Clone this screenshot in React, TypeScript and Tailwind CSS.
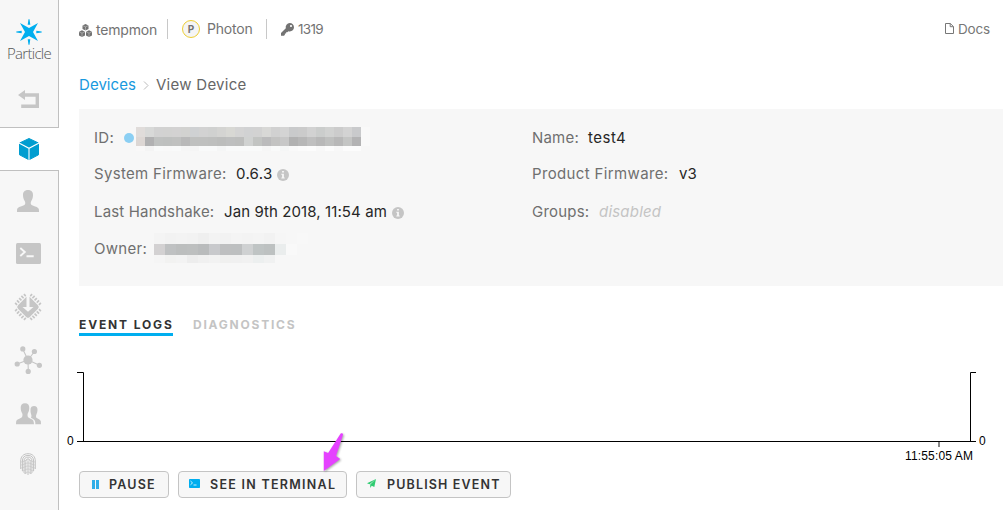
import type { ReactNode } from 'react';

const idTop = ['#e0dcda', '#d8d9d8', '#d2d2d2', '#d2d2d1', '#d3d2d2', '#d2d2d0', '#cfd1d3', '#d2d2d2', '#d0d1d0', '#d4d4d2', '#d8d8d4', '#d4d4d4', '#d1d2d3', '#d2d2d2', '#d8d8d6', '#d1d1d1', '#d4d4d4', '#c9cacb', '#cbcbcb', '#d2d2d2', '#cbcdcc', '#d1d2d1', '#cccccc', '#d3d3d3', '#c9cacc', '#f9f9f9'];
const idBottom = ['#ddd7d4', '#b1b1b2', '#bfc1c0', '#bec0bf', '#c0c1c0', '#b9b9b9', '#bfc0bf', '#bfc0bf', '#bebfbe', '#bcbdbc', '#bebfbf', '#bdbebd', '#d0d2d1', '#c2c4c2', '#bbbbbc', '#c3c3c2', '#c7c7c7', '#b1b1b1', '#b7b7b7', '#bfbfbf', '#b8b8b8', '#bfc0bf', '#b8b8b8', '#c4c5c4', '#b3b3b4', '#f9f9f9'];
const idFaint = ['#f9f8f8', '#f4f4f4', '#f9fafa', '#f9f9f9', '#f9fafa', '#f6f6f6', '#f5f5f5', '#f9fafa', '#f9fafa', '#f5f6f6', '#f9fafa', '#f9fafa', '#f9fafa', '#f9fafa', '#f6f6f6', '#f9fafa', '#f5f6f6', '#f9f9f9', '#fbfbfb', '#fcfcfc', '#f8f8f8', '#fcfcfc', '#f8f8f8', '#fcfcfc', '#fcfcfc', '#f7f7f7'];
const ownerTop = ['#f4f4f4', '#f2f2f2', '#f3f3f3', '#f2f2f2', '#efefef', '#f3f3f3', '#f2f2f2', '#f4f4f4', '#f3f3f3', '#f4f4f4', '#f2f2f2', '#f6f6f6', '#f7f7f7', '#f8f8f8'];
const ownerMid = ['#d3d1d2', '#bfc1c2', '#bcbebe', '#bdbfbf', '#b9bbbc', '#c8c9cc', '#bebfc0', '#bdbfc0', '#cfd1d2', '#bfc4c4', '#bdc1c1', '#eaeded', '#f9f9f9', '#f7f7f7'];
const ownerLow = ['#f5f5f5', '#f2f2f1', '#f3f3f3', '#ededed', '#f0f0f0', '#f2f2f2', '#f0f0ef', '#f0f0f0', '#f1f1f1', '#ecefef', '#f0f1f1', '#f7f7f7', '#f7f7f7', '#f7f7f7'];

function Cells({ colors, cell, row }: { colors: string[]; cell: string; row: string }) {
  return (
    <div className="flex">
      {colors.map((c, i) => (
        <span key={i} className={`block shrink-0 ${cell} ${row}`} style={{ backgroundColor: c }} />
      ))}
    </div>
  );
}

function Info() {
  return (
    <svg width="12" height="12" viewBox="0 0 12 12" className="mt-px shrink-0">
      <circle cx="6" cy="6" r="6" fill="#c5c5c5" />
      <path d="M5.1 2h1.8v1.5H5.1zM4.3 4.7h2.6v3.7h.8v1H4.3v-1h.8V5.7h-.8z" fill="#f7f7f7" />
    </svg>
  );
}

function Star() {
  return (
    <svg width="26" height="26" viewBox="-13 -13 26 26" fill="#00aeef">
      <path d="M-9-9 0-4 9-9 4 0 9 9 0 4-9 9-4 0z" />
      <path d="M-1.300-7.300h2.600L.5-12.700h-1zM-1.300 7.300h2.600l-.8 5.400h-1zM-7.300-1.300v2.600L-12.700.5v-1zM7.300-1.300v2.600L12.700.5v-1z" />
    </svg>
  );
}

function Person() {
  return (
    <svg width="22" height="22" viewBox="0 0 22 22" fill="#c6c6c6" className="mr-[2px]">
      <path d="M11 0c3.400 0 5.200 2.100 5 5.300-.1 2.600-.7 4.300-1.700 5.700-.8 1.200-.8 3.500.3 4.100 2.900 1.400 6.900 2 7.300 4.400.1.800.1 1.600.1 2.500H0c0-.9 0-1.700.1-2.500.4-2.400 4.400-3 7.300-4.400 1.100-.6 1.100-2.900.3-4.100C6.700 9.600 6.100 7.900 6 5.300 5.800 2.100 7.600 0 11 0z" />
    </svg>
  );
}

function Chip() {
  return (
    <svg width="28" height="28" viewBox="-14 -14 28 28">
      <g transform="rotate(45)">
        <rect x="-8.300" y="-8.300" width="16.600" height="16.600" rx="2.500" fill="#c6c6c6" />
        <path d="M-6.200-12V-9.300M-3.100-12.500V-9.300M0-12.500V-9.300M3.100-12.500V-9.300M6.200-12V-9.300M-6.200 12V9.300M-3.100 12.500V9.300M0 12.500V9.300M3.100 12.500V9.300M6.200 12V9.300M-12-6.200H-9.300M-12.500-3.100H-9.300M-12.500 0H-9.300M-12.500 3.100H-9.300M-12-6.200H-9.300M-12 6.200H-9.300M12-6.200H9.300M12.500-3.100H9.300M12.500 0H9.300M12.500 3.100H9.300M12 6.200H9.300" stroke="#c6c6c6" strokeWidth="1.700" />
      </g>
      <path d="M-1.500-13h3V0h4L0 4.800-5.500 0h4z" fill="#f7f7f7" />
    </svg>
  );
}

function Finger() {
  return (
    <svg width="16" height="23" viewBox="0 0 16 23" fill="none" stroke="#c2c2c2" strokeWidth="1">
      <path d="M.7 16V8C.7 3.500 3.500.7 8 .7s7.300 2.800 7.300 7.300v8M2.400 18V8c0-3.700 2.100-5.600 5.600-5.600s5.600 1.900 5.600 5.600v10M4.100 20V8c0-2.500 1.400-3.900 3.900-3.900s3.900 1.400 3.900 3.900v12M5.800 21V8.500c0-1.600.7-2.600 2.200-2.600s2.200 1 2.200 2.600V21M8 22V8" />
      <path d="M1 9c3 0 4-2 7-2s4 2 7 2M1 12c3 0 4-2 7-2s4 2 7 2M1 15c3 0 4-2 7-2s4 2 7 2M2 18c3 0 3-2 6-2s3 2 6 2M4 20.500c2 0 2-1.500 4-1.500s2 1.500 4 1.500" strokeWidth=".6" />
    </svg>
  );
}

function Sidebar() {
  return (
    <nav className="flex h-full w-[59px] shrink-0 flex-col">
      <div className="flex h-[127px] flex-col items-center border-r border-[#c0c0c0] bg-[#f7f7f7] pt-[19px]">
        <Star />
        <div className="h-[16px] font-['Open_Sans'] text-[15px] leading-[16px] font-light tracking-[-0.700px] whitespace-nowrap text-[#555]">Particle</div>
        <svg width="22" height="18" viewBox="0 0 22 18" className="mt-[29px]" fill="#c6c6c6">
          <path d="M0 5 7 0v3.200h14V18H3.200v-3.600H17.600V6.800H7V10z" />
        </svg>
      </div>
      <div className="flex h-[44px] items-center justify-center border-y border-[#c0c0c0] bg-white">
        <svg width="22" height="24" viewBox="0 0 22 24" className="mr-[2px]">
          <path d="M11 1.500 20.500 6v11.800l-9.500 5-9.500-5V6z" fill="#019dd0" stroke="#019dd0" strokeLinejoin="round" />
          <path d="m.5 5.700 10.500 5.600 10.500-5.600M11 11.300V24" fill="none" stroke="#fff" strokeWidth="1.100" />
        </svg>
      </div>
      <div className="flex flex-1 flex-col items-center border-r border-[#c0c0c0] bg-[#f7f7f7] pt-[19px]">
        <Person />
        <svg width="25" height="21" viewBox="0 0 25 21" className="mt-[31px] mr-px">
          <rect width="25" height="21" rx="1.500" fill="#c6c6c6" />
          <path d="m4.300 5 4.500 4-4.500 4M10.500 13.300h7.200" fill="none" stroke="#f7f7f7" strokeWidth="1.900" />
        </svg>
        <div className="mt-[29px] mr-[2px] h-[28px]"><Chip /></div>
        <svg width="28" height="28" viewBox="0 0 28 28" className="mt-[25px] mr-[2px]" fill="#c6c6c6">
          <path d="M14 14 8.700 3M14 14 20.500 5.500M14 14 3 18M14 14l11.500 5.300M14 14l.3 11.500" stroke="#c6c6c6" strokeWidth="1.100" />
          <circle cx="14" cy="14" r="4.600" />
          <circle cx="8.800" cy="2.900" r="2.600" />
          <circle cx="20.400" cy="5.500" r="2.600" />
          <circle cx="3.200" cy="18" r="2.600" />
          <circle cx="25.400" cy="19.300" r="2.600" />
          <circle cx="14.200" cy="25.400" r="2.600" />
        </svg>
        <svg width="25" height="22" viewBox="0 0 25 22" className="mt-[29px] mr-px" fill="#c6c6c6">
          <path d="M9 .3c3 0 4.400 1.800 4.300 4.700-.1 2.500-.7 4-1.400 5-.7 1.200-.4 4 .5 4.600 2.300 1.500 5 2 5.300 4.300L18 21.300H0l.1-2.400c.3-2.300 3.200-2.800 5.500-4.300.9-.6 1.200-3.400.5-4.600C5.400 9 4.800 7.500 4.700 5 4.600 2.100 6 .3 9 .3z" />
          <path d="M14.700 5.200c.5-1.300 1.600-2.100 3.300-2.100 2.400 0 3.600 1.400 3.500 4-.1 2-.5 3.200-1 4.100-.7 1.300-.6 3.300.2 3.700 1.900 1 4 1.700 4.200 3.700l.1 2.700h-5.600c0-2.900-.5-4.300-2.600-5.500l-1.900-1c.6-.7.8-2.600.2-3.600-.6-1.200-.8-4-.4-6z" />
        </svg>
        <div className="mt-[28px] mr-[2px] h-[23px]"><Finger /></div>
      </div>
    </nav>
  );
}

function Button({ width, icon, children }: { width: string; icon: ReactNode; children: ReactNode }) {
  return (
    <button className={`flex h-[27px] items-center rounded-[4px] border border-[#c4c4c4] bg-[#f7f7f7] text-[12.500px] font-semibold whitespace-nowrap text-[#333] ${width}`}>
      {icon}
      {children}
    </button>
  );
}

const label = 'shrink-0 whitespace-nowrap text-[#6f6f6f]';
const value = 'shrink-0 whitespace-nowrap text-[#262626]';

export default function App() {
  return (
    <div className="flex h-[510px] w-[1003px] overflow-hidden bg-white font-[Inter,sans-serif]">
      <Sidebar />
      <main className="flex min-w-0 flex-1 flex-col">
        <header className="ml-[20px] flex h-[58px] shrink-0 items-center text-[14px] whitespace-nowrap text-[#737373]">
          <svg width="13" height="13" viewBox="0 0 13 13" className="mt-[3px]" fill="#737373">
            <path d="m6.500 0 3 1.500v3.600l-3 1.500-3-1.500V1.500zM3 6.200l3 1.500v3.700l-3 1.500-3-1.500V7.700zM10 6.200l3 1.500v3.700l-3 1.500-3-1.500V7.700z" />
            <path d="m3.500 1.500 3 1.400 3-1.400M6.500 2.900v3.700M0 7.700l3 1.400 3-1.400M3 9.100v3.800M7 7.700l3 1.400 3-1.400M10 9.100v3.800" fill="none" stroke="#fff" strokeWidth=".35" />
          </svg>
          <span className="ml-[4px] w-[71px] tracking-[-0.200px]">tempmon</span>
          <span className="h-[20px] w-px bg-[#c8c8c8]" />
          <span className="ml-[14px] flex h-[18px] w-[18px] items-center justify-center rounded-full border border-[#edce34] bg-[#f5f5f5] text-[10px] font-bold">P</span>
          <span className="ml-[7px] w-[59px] pb-[2px] tracking-[-0.200px]">Photon</span>
          <span className="h-[20px] w-px bg-[#c8c8c8]" />
          <svg width="13" height="13" viewBox="0 0 13 13" className="ml-[14px]" fill="#737373">
            <path fillRule="evenodd" d="M8.800 0C11.100 0 13 1.900 13 4.200S11.100 8.400 8.800 8.400c-.5 0-1-.1-1.400-.2L6.300 9.300H5.100v1.300H3.900v1.200L3 12.700H0V10l4.800-4.700A4.200 4.200 0 0 1 8.800 0zm1.200 1.900a1.100 1.100 0 1 0 0 2.200 1.100 1.100 0 0 0 0-2.200z" />
          </svg>
          <span className="ml-[4px] flex-1 pt-px text-[13.500px] tracking-[-0.700px]">1319</span>
          <span className="mr-[13px] flex items-center text-[13.500px] text-[#777]">
            <svg width="9" height="11" viewBox="0 0 9 11" fill="none" stroke="#777" className="mb-[2px]"><path d="M.5.500h4.800L8.500 3.600v6.900h-8zM5.200.5v3.200h3.200" /></svg>
            <span className="ml-[4px] w-[32px] tracking-[-0.150px]">Docs</span>
          </span>
        </header>
        <div className="flex h-[51px] shrink-0 items-center pt-[4px] pl-[20px] text-[15px] whitespace-nowrap">
          <span className="w-[64px] tracking-[0.050px] text-[#1899de]">Devices</span>
          <svg width="7" height="9" viewBox="0 0 7 9" fill="none" stroke="#bbb"><path d="m1 .5 4 4-4 4" /></svg>
          <span className="ml-[6px] tracking-[0.270px] text-[#666]">View Device</span>
        </div>
        <section className="ml-[20px] flex h-[177px] shrink-0 bg-[#f7f7f7] pl-[15px] text-[15px]">
          <div className="w-[438px] shrink-0">
            <div className="flex h-[47px] items-start pt-[18px]">
              <span className={`${label} mt-px w-[30px] leading-[20px] tracking-[0.300px]`}>ID:</span>
              <span className="mt-[6px] h-[10px] w-[10px] rounded-full bg-[#8bcff3]" />
              <div className="ml-[2px]">
                <Cells colors={idTop} cell="w-[9px]" row="h-[10px]" />
                <Cells colors={idBottom} cell="w-[9px]" row="h-[9px]" />
                <Cells colors={idFaint} cell="w-[9px]" row="h-[5px]" />
              </div>
            </div>
            <div className="flex h-[37px] items-center">
              <span className={`${label} w-[142px] tracking-[0.320px]`}>System Firmware:</span>
              <span className={`${value} w-[41px] tracking-[0.300px]`}>0.6.3</span>
              <Info />
            </div>
            <div className="flex h-[38px] items-center">
              <span className={`${label} w-[130px] tracking-[0.170px]`}>Last Handshake:</span>
              <span className={`${value} w-[168px] tracking-[0.090px]`}>Jan 9th 2018, 11:54 am</span>
              <Info />
            </div>
            <div className="flex h-[36px] items-start pt-[2px]">
              <span className={`${label} w-[60px] pt-[6px] leading-[20px] tracking-[0.300px]`}>Owner:</span>
              <div>
                <Cells colors={ownerTop} cell="w-[11px]" row="h-[11px]" />
                <Cells colors={ownerMid} cell="w-[11px]" row="h-[11px]" />
                <Cells colors={ownerLow} cell="w-[11px]" row="h-[8px]" />
              </div>
            </div>
          </div>
          <div>
            <div className="flex h-[47px] items-center pt-[11px]">
              <span className={`${label} w-[56px] tracking-[0.200px]`}>Name:</span>
              <span className={`${value} tracking-[0.500px]`}>test4</span>
            </div>
            <div className="flex h-[37px] items-center">
              <span className={`${label} w-[147px] tracking-[0.360px]`}>Product Firmware:</span>
              <span className={value}>v3</span>
            </div>
            <div className="flex h-[38px] items-center">
              <span className={`${label} w-[67px] tracking-[0.200px]`}>Groups:</span>
              <span className="tracking-[0.200px] text-[#c4c4c4] italic">disabled</span>
            </div>
          </div>
        </section>
        <div className="mt-[29px] ml-[20px] flex h-[21px] shrink-0 gap-[20px] text-[12px] leading-[20px] font-bold whitespace-nowrap">
          <span className="h-[21px] w-[94px] border-b-[3px] border-[#00aeef] tracking-[1.850px] text-[#333]">EVENT LOGS</span>
          <span className="tracking-[1.770px] text-[#c4c4c4]">DIAGNOSTICS</span>
        </div>
        <div className="mt-[27px] h-[108px] shrink-0">
          <svg width="944" height="108" viewBox="0 0 944 108" fill="none" stroke="#000" className="font-['Liberation_Sans']">
            <path d="M18 9.500h6.500v69M18 78.500h899M917 9.500h-5.500v69" />
            <path d="M880 79v5" stroke="#888" strokeWidth="2" />
            <g fill="#000" stroke="none" fontSize="12">
              <text x="8" y="82">0</text>
              <text x="920" y="82">0</text>
              <text x="846" y="97" textLength="68">11:55:05 AM</text>
            </g>
          </svg>
        </div>
        <div className="relative ml-[20px] flex gap-[9px]">
          <Button width="w-[90px]" icon={<span className="mr-[10px] ml-[12px] flex h-[9px] w-[7px] justify-between"><i className="w-[3px] bg-[#30aee8]" /><i className="w-[3px] bg-[#30aee8]" /></span>}>
            <span className="pt-[2px] tracking-[1.200px]">PAUSE</span>
          </Button>
          <Button width="w-[169px]" icon={<svg width="11" height="9" viewBox="0 0 11 9" className="mr-[10px] mb-[2px] ml-[10px]"><rect width="11" height="9" rx=".7" fill="#00aeef" /><path d="m1.500 2 2 1.900-2 1.900M4.500 6h3" fill="none" stroke="#fff" strokeWidth=".8" /></svg>}>
            <span className="pt-[2px] tracking-[1.280px]">SEE IN TERMINAL</span>
          </Button>
          <Button width="w-[155px]" icon={<svg width="9" height="9" viewBox="0 0 9 9" className="mr-[11px] mb-[2px] ml-[10px]"><path d="M9 0 0 4.300l2.500 1zM9 0 3.200 5.600V9l1.500-2.300L7.300 8z" fill="#2ecc71" /></svg>}>
            <span className="pt-[2px] tracking-[1.150px]">PUBLISH EVENT</span>
          </Button>
          <svg width="24" height="42" viewBox="0 0 24 42" className="absolute -top-[40px] left-[243px] drop-shadow-[1px_1px_1px_rgba(0,0,0,0.35)]">
            <path d="M18.500 2.800c.8-1 2.800-.4 2.500 1L14 25l4.200 3L1.800 40V20.200l4.300 1.700z" fill="#e542ff" />
          </svg>
        </div>
      </main>
    </div>
  );
}
